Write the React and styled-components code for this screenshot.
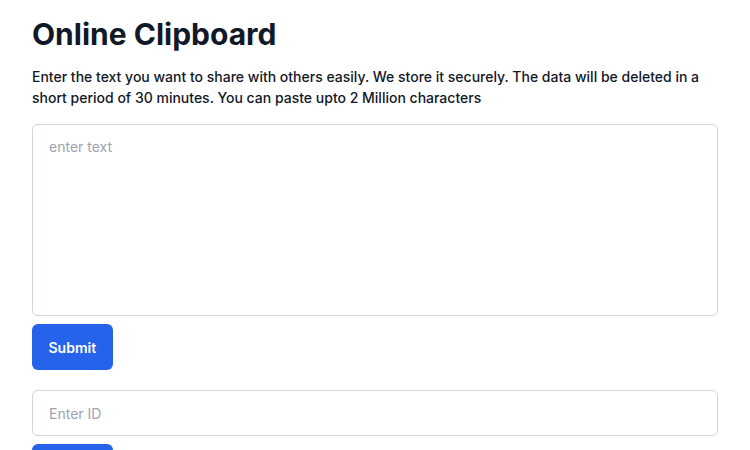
import React, { useState } from "react"
import styled, { createGlobalStyle } from "styled-components"

const GlobalStyle = createGlobalStyle`
  * { box-sizing: border-box; }
  body {
    margin: 0;
    background: #ffffff;
    font-family: Inter, "Noto Sans", sans-serif;
    color: #111827;
  }
`

const Page = styled.main`
  display: flex;
  flex-direction: column;
  padding: 16px 32px;
`

const Title = styled.h1`
  margin: 0 0 14px;
  font-size: 30px;
  line-height: 36px;
  font-weight: 700;
  color: #111827;
`

const Intro = styled.p`
  margin: 0 0 16px;
  font-size: 14px;
  line-height: 21px;
  font-weight: 500;
  color: #111827;
`

const fieldCss = `
  width: 100%;
  border: 1px solid #d1d5db;
  border-radius: 6px;
  padding: 12px 16px;
  font-family: Inter, "Noto Sans", sans-serif;
  font-size: 14px;
  line-height: 20px;
  color: #111827;
  background: #ffffff;
  outline: none;

  &::placeholder {
    color: #9ca3af;
  }
`

const TextArea = styled.textarea`
  ${fieldCss}
  height: 192px;
  resize: none;
  display: block;
`

const Input = styled.input`
  ${fieldCss}
  height: 46px;
  display: block;
`

const Button = styled.button`
  align-self: flex-start;
  height: 46px;
  margin-top: 8px;
  margin-bottom: ${(p) => p.$gap || 0}px;
  padding: 0 16.5px;
  border: none;
  border-radius: 6px;
  background: #2563eb;
  color: #ffffff;
  font-family: Inter, "Noto Sans", sans-serif;
  font-size: 14px;
  font-weight: 600;
  cursor: pointer;
`

export default function App() {
  const [text, setText] = useState("")
  const [id, setId] = useState("")

  return (
    <Page>
      <GlobalStyle />
      <Title>Online Clipboard</Title>
      <Intro>
        Enter the text you want to share with others easily. We store it
        securely. The data will be deleted in a short period of 30 minutes. You
        can paste upto 2 Million characters
      </Intro>
      <TextArea
        placeholder="enter text"
        value={text}
        onChange={(e) => setText(e.target.value)}
      />
      <Button $gap={20}>Submit</Button>
      <Input
        placeholder="Enter ID"
        value={id}
        onChange={(e) => setId(e.target.value)}
      />
      <Button>Submit</Button>
    </Page>
  )
}
